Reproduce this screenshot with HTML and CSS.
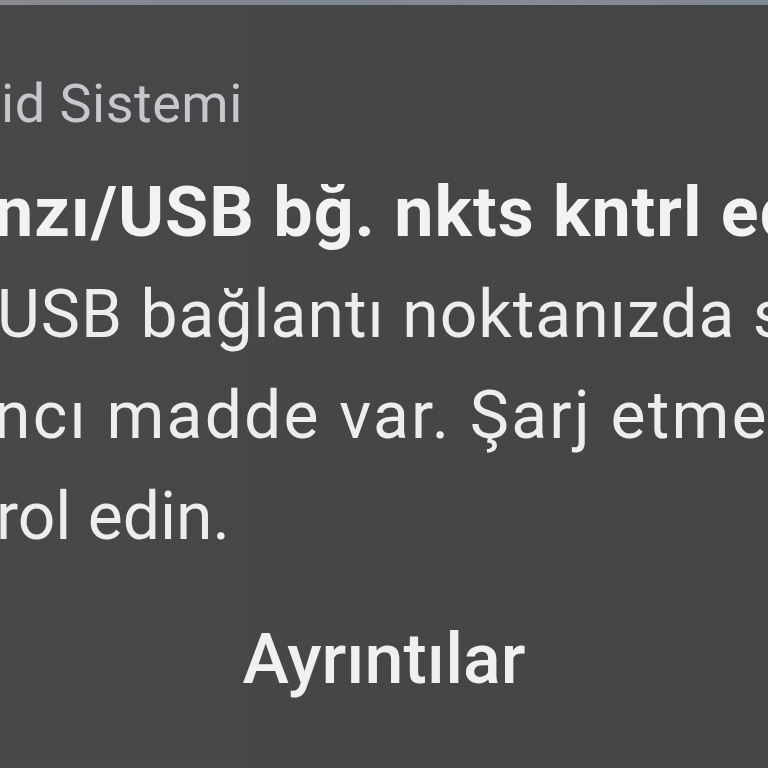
FILE: index.html
```html
<!DOCTYPE html>
<html lang="tr">
<head>
    <meta charset="UTF-8">
    <meta name="viewport" content="width=device-width, initial-scale=1.0">
    <title>Android Sistemi</title>
    <link rel="stylesheet" href="styles.css">
</head>
<body>
    <div class="ust-serit"></div>
    <div class="bildirim">
        <div class="uygulama">id Sistemi</div>
        <div class="baslik">nzı/USB bğ. nkts kntrl edin</div>
        <div class="metin">
            <div class="satir kes-1">USB bağlantı noktanızda sıvı</div>
            <div class="satir kes-2">ncı madde var. Şarj etmeden</div>
            <div class="satir kes-3">rol edin.</div>
        </div>
        <div class="eylem">Ayrıntılar</div>
    </div>
</body>
</html>
```

FILE: styles.css
```css
/* Bildirim kartı, ekranın kesilmiş bir parçası */
body {
    margin: 0;
    width: 768px;
    height: 768px;
    overflow: hidden;
    background-color: #454648;
    font-family: Roboto, "Liberation Sans", sans-serif;
}
.ust-serit {
    height: 5px;
    background: linear-gradient(90deg, #8a8b90, #7e8593 40%, #868b95 70%, #7f8790);
}
.bildirim {
    display: flex;
    flex-direction: column;
    background: linear-gradient(90deg, #48484a, #454648 50%, #434547);
    height: 763px;
    overflow: hidden;
    white-space: nowrap;
}
.uygulama {
    margin-top: 69px;
    font-size: 54px;
    line-height: 60px;
    letter-spacing: 0.5px;
    color: #c6c7cb;
    padding-left: 1px;
}
.baslik {
    margin-top: 38px;
    font-size: 70px;
    line-height: 80px;
    font-weight: bold;
    letter-spacing: 1px;
    color: #f2f2f2;
    margin-left: -6px;
}
.metin {
    margin-top: 12px;
    font-size: 66px;
    line-height: 101px;
    letter-spacing: 1px;
    color: #ededed;
}
.kes-1 {
    margin-left: -3px;
}
.kes-2 {
    margin-left: -6px;
    letter-spacing: 2.2px;
}
.kes-3 {
    margin-left: -4px;
    letter-spacing: 0;
}
.eylem {
    margin-top: 52px;
    font-size: 70px;
    line-height: 80px;
    font-weight: 500;
    color: #f0f0f0;
    text-align: center;
}
```
